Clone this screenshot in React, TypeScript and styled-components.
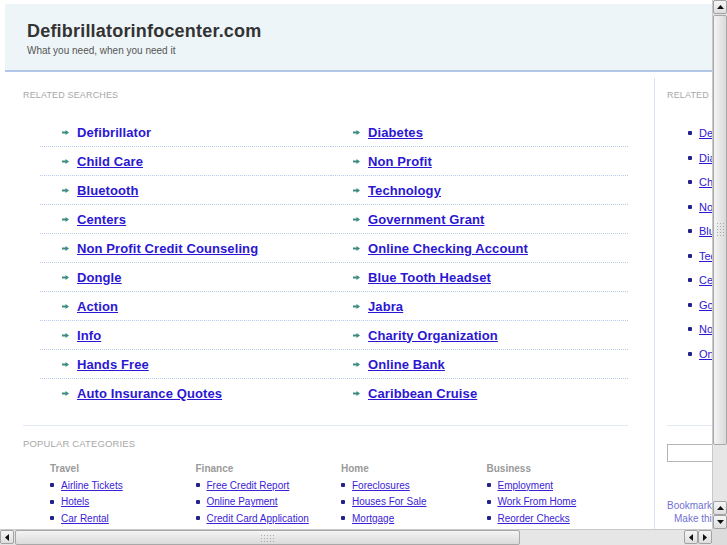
import styled, { createGlobalStyle } from 'styled-components';

const GlobalStyle = createGlobalStyle`
  html, body {
    margin: 0;
    padding: 0;
    background: #fff;
  }
  body {
    font-family: 'Liberation Sans', Arial, sans-serif;
  }
`;

const related = [
  'Defibrillator',
  'Diabetes',
  'Child Care',
  'Non Profit',
  'Bluetooth',
  'Technology',
  'Centers',
  'Government Grant',
  'Non Profit Credit Counseling',
  'Online Checking Account',
  'Dongle',
  'Blue Tooth Headset',
  'Action',
  'Jabra',
  'Info',
  'Charity Organization',
  'Hands Free',
  'Online Bank',
  'Auto Insurance Quotes',
  'Caribbean Cruise',
];

const categories = [
  { title: 'Travel', links: ['Airline Tickets', 'Hotels', 'Car Rental'] },
  { title: 'Finance', links: ['Free Credit Report', 'Online Payment', 'Credit Card Application'] },
  { title: 'Home', links: ['Foreclosures', 'Houses For Sale', 'Mortgage'] },
  { title: 'Business', links: ['Employment', 'Work From Home', 'Reorder Checks'] },
];

const Window = styled.div`
  width: 727px;
  height: 545px;
  display: grid;
  grid-template-columns: 1fr 15px;
  grid-template-rows: 1fr 16px;
  overflow: hidden;
  background: #fff;
`;

const Viewport = styled.div`
  overflow: hidden;
  padding: 4px 0 0 5px;
`;

const Page = styled.div`
  width: 790px;
`;

const Header = styled.header`
  height: 68px;
  padding: 16px 0 0 22px;
  box-sizing: border-box;
  background: #eef5f8;
  border-bottom: 2px solid #b2c6e8;
`;

const SiteTitle = styled.h1`
  margin: 0;
  font-size: 18px;
  line-height: 22px;
  font-weight: bold;
  color: #333;
  letter-spacing: 0.2px;
`;

const Tagline = styled.p`
  margin: 3px 0 0;
  font-size: 10px;
  line-height: 12px;
  color: #555;
`;

const Main = styled.div`
  display: flex;
  margin-top: 6px;
`;

const LeftColumn = styled.div`
  flex: none;
  width: 650px;
  height: 460px;
  padding: 12px 0 0 18px;
  box-sizing: border-box;
  border-right: 1px solid #d6e1f2;
`;

const RightColumn = styled.div`
  flex: 1;
  min-width: 0;
  padding: 12px 0 0 12px;
`;

const SectionLabel = styled.div`
  font-size: 9px;
  line-height: 11px;
  color: #a8a8a8;
  text-transform: uppercase;
  letter-spacing: 0.15px;
  white-space: nowrap;
`;

const SearchGrid = styled.ul`
  list-style: none;
  margin: 17px 0 0 17px;
  padding: 0;
  width: 588px;
  display: grid;
  grid-template-columns: 291px 297px;
`;

const SearchItem = styled.li<{ $last?: boolean }>`
  height: 28px;
  display: flex;
  align-items: center;
  padding-left: 22px;
  border-bottom: 1px dotted ${(p) => (p.$last ? 'transparent' : '#b7cbe8')};
`;

const ArrowIcon = styled.svg`
  width: 7px;
  height: 5px;
  margin-right: 8px;
  flex: none;
`;

const SearchLink = styled.a<{ $plain?: boolean }>`
  font-size: 13px;
  font-weight: bold;
  color: #2b17d3;
  letter-spacing: 0.1px;
  text-decoration: ${(p) => (p.$plain ? 'none' : 'underline')};
`;

const Rule = styled.div`
  height: 1px;
  background: #e1e9f4;
`;

const PopularBlock = styled.div`
  margin-top: 17px;
  width: 605px;
`;

const PopularLabel = styled(SectionLabel)`
  margin-top: 12px;
  font-size: 9.5px;
`;

const CategoryGrid = styled.div`
  display: grid;
  grid-template-columns: repeat(4, 145.5px);
  padding-left: 27px;
  margin-top: 14px;
`;

const CategoryTitle = styled.div`
  font-size: 10px;
  line-height: 12px;
  font-weight: bold;
  color: #9a9a9a;
`;

const CategoryList = styled.ul`
  list-style: none;
  margin: 2px 0 0;
  padding: 0;
`;

const CategoryItem = styled.li`
  height: 16.5px;
  display: flex;
  align-items: center;
`;

const Bullet = styled.span`
  width: 4px;
  height: 4px;
  border-radius: 1px;
  background: #22228a;
  margin-right: 7px;
  flex: none;
`;

const SmallLink = styled.a`
  font-size: 10px;
  color: #3a22d8;
  text-decoration: underline;
  white-space: nowrap;
`;

const SideList = styled.ul`
  list-style: none;
  margin: 20px 0 0;
  padding: 0 0 0 21px;
`;

const SideItem = styled.li`
  height: 24.5px;
  display: flex;
  align-items: center;
`;

const SideLink = styled.a`
  font-size: 11px;
  color: #2b17d3;
  text-decoration: underline;
  white-space: nowrap;
`;

const SideRule = styled(Rule)`
  margin-top: 59px;
`;

const SearchBox = styled.input`
  display: block;
  margin-top: 18px;
  width: 90px;
  height: 18px;
  box-sizing: border-box;
  border: 1px solid #b4b4b4;
  background: #fff;
  padding: 0;
`;

const Bookmark = styled.div<{ $indent?: number }>`
  font-size: 10px;
  line-height: 13px;
  color: #7272d4;
  padding-left: ${(p) => p.$indent ?? 0}px;
  white-space: nowrap;
`;

const BookmarkBlock = styled.div`
  margin-top: 37px;
`;

/* fake GTK scrollbars */

const VScroll = styled.div`
  display: flex;
  flex-direction: column;
  background: #e3e3e3;
  border-left: 1px solid #c8c8c8;
  box-sizing: border-box;
`;

const HScroll = styled.div`
  display: flex;
  background: #e3e3e3;
  border-top: 1px solid #c8c8c8;
  box-sizing: border-box;
`;

const Corner = styled.div`
  background: #dcdcdc;
`;

const ArrowButton = styled.div`
  width: 14px;
  height: 14px;
  flex: none;
  box-sizing: border-box;
  border: 1px solid #a2a2a2;
  border-radius: 2px;
  background: linear-gradient(#f6f6f6, #dedede);
  display: flex;
  align-items: center;
  justify-content: center;
`;

const Track = styled.div`
  flex: 1;
  background-color: #e6e6e6;
  background-image: radial-gradient(#d6d6d6 0.6px, transparent 0.7px);
  background-size: 2px 2px;
`;

const Thumb = styled.div<{ $vertical?: boolean }>`
  flex: none;
  box-sizing: border-box;
  border: 1px solid #a8a8a8;
  border-radius: 2px;
  background: ${(p) =>
    p.$vertical
      ? 'linear-gradient(90deg, #f4f4f4, #dadada)'
      : 'linear-gradient(#f4f4f4, #dadada)'};
  display: flex;
  align-items: center;
  justify-content: center;
`;

const Grip = styled.div<{ $vertical?: boolean }>`
  width: ${(p) => (p.$vertical ? 8 : 16)}px;
  height: ${(p) => (p.$vertical ? 16 : 8)}px;
  background-image: radial-gradient(#a9a9a9 0.7px, transparent 0.8px);
  background-size: 3px 3px;
`;

type Dir = 'up' | 'down' | 'left' | 'right';

const triangle: Record<Dir, string> = {
  up: 'M0 4L3.5 0L7 4Z',
  down: 'M0 0L7 0L3.5 4Z',
  left: 'M4 0L4 7L0 3.5Z',
  right: 'M0 0L4 3.5L0 7Z',
};

const Arrow = ({ dir }: { dir: Dir }) => {
  const h = dir === 'up' || dir === 'down';
  return (
    <ArrowButton>
      <svg width={h ? 7 : 4} height={h ? 4 : 7} viewBox={h ? '0 0 7 4' : '0 0 4 7'}>
        <path d={triangle[dir]} fill="#111" />
      </svg>
    </ArrowButton>
  );
};

const Gap = styled.div<{ $size: number }>`
  flex: none;
  width: ${(p) => p.$size}px;
  height: ${(p) => p.$size}px;
`;

const App = (): JSX.Element => {
  return (
    <>
      <GlobalStyle />
      <Window>
        <Viewport>
          <Page>
            <Header>
              <SiteTitle>Defibrillatorinfocenter.com</SiteTitle>
              <Tagline>What you need, when you need it</Tagline>
            </Header>
            <Main>
              <LeftColumn>
                <SectionLabel>Related Searches</SectionLabel>
                <SearchGrid>
                  {related.map((term, i) => (
                    <SearchItem key={term} $last={i >= related.length - 2}>
                      <ArrowIcon viewBox="0 0 7 5">
                        <path d="M0 1.5h3.5V0L7 2.5 3.5 5V3.5H0z" fill="#3a8c80" />
                      </ArrowIcon>
                      <SearchLink href="#" $plain={i === 0}>
                        {term}
                      </SearchLink>
                    </SearchItem>
                  ))}
                </SearchGrid>
                <PopularBlock>
                  <Rule />
                  <PopularLabel>Popular Categories</PopularLabel>
                  <CategoryGrid>
                    {categories.map((cat) => (
                      <div key={cat.title}>
                        <CategoryTitle>{cat.title}</CategoryTitle>
                        <CategoryList>
                          {cat.links.map((link) => (
                            <CategoryItem key={link}>
                              <Bullet />
                              <SmallLink href="#">{link}</SmallLink>
                            </CategoryItem>
                          ))}
                        </CategoryList>
                      </div>
                    ))}
                  </CategoryGrid>
                </PopularBlock>
              </LeftColumn>
              <RightColumn>
                <SectionLabel>Related Searches</SectionLabel>
                <SideList>
                  {related.slice(0, 10).map((term) => (
                    <SideItem key={term}>
                      <Bullet />
                      <SideLink href="#">{term}</SideLink>
                    </SideItem>
                  ))}
                </SideList>
                <SideRule />
                <SearchBox type="text" />
                <BookmarkBlock>
                  <Bookmark>Bookmark this page</Bookmark>
                  <Bookmark $indent={7}>Make this your homepage</Bookmark>
                </BookmarkBlock>
              </RightColumn>
            </Main>
          </Page>
        </Viewport>
        <VScroll>
          <Arrow dir="up" />
          <Gap $size={1} />
          <Thumb $vertical style={{ height: 430 }}>
            <Grip $vertical />
          </Thumb>
          <Track />
          <Arrow dir="up" />
          <Arrow dir="down" />
        </VScroll>
        <HScroll>
          <Arrow dir="left" />
          <Gap $size={1} />
          <Thumb style={{ width: 505 }}>
            <Grip />
          </Thumb>
          <Track />
          <Arrow dir="left" />
          <Arrow dir="right" />
        </HScroll>
        <Corner />
      </Window>
    </>
  );
};

export default App;
